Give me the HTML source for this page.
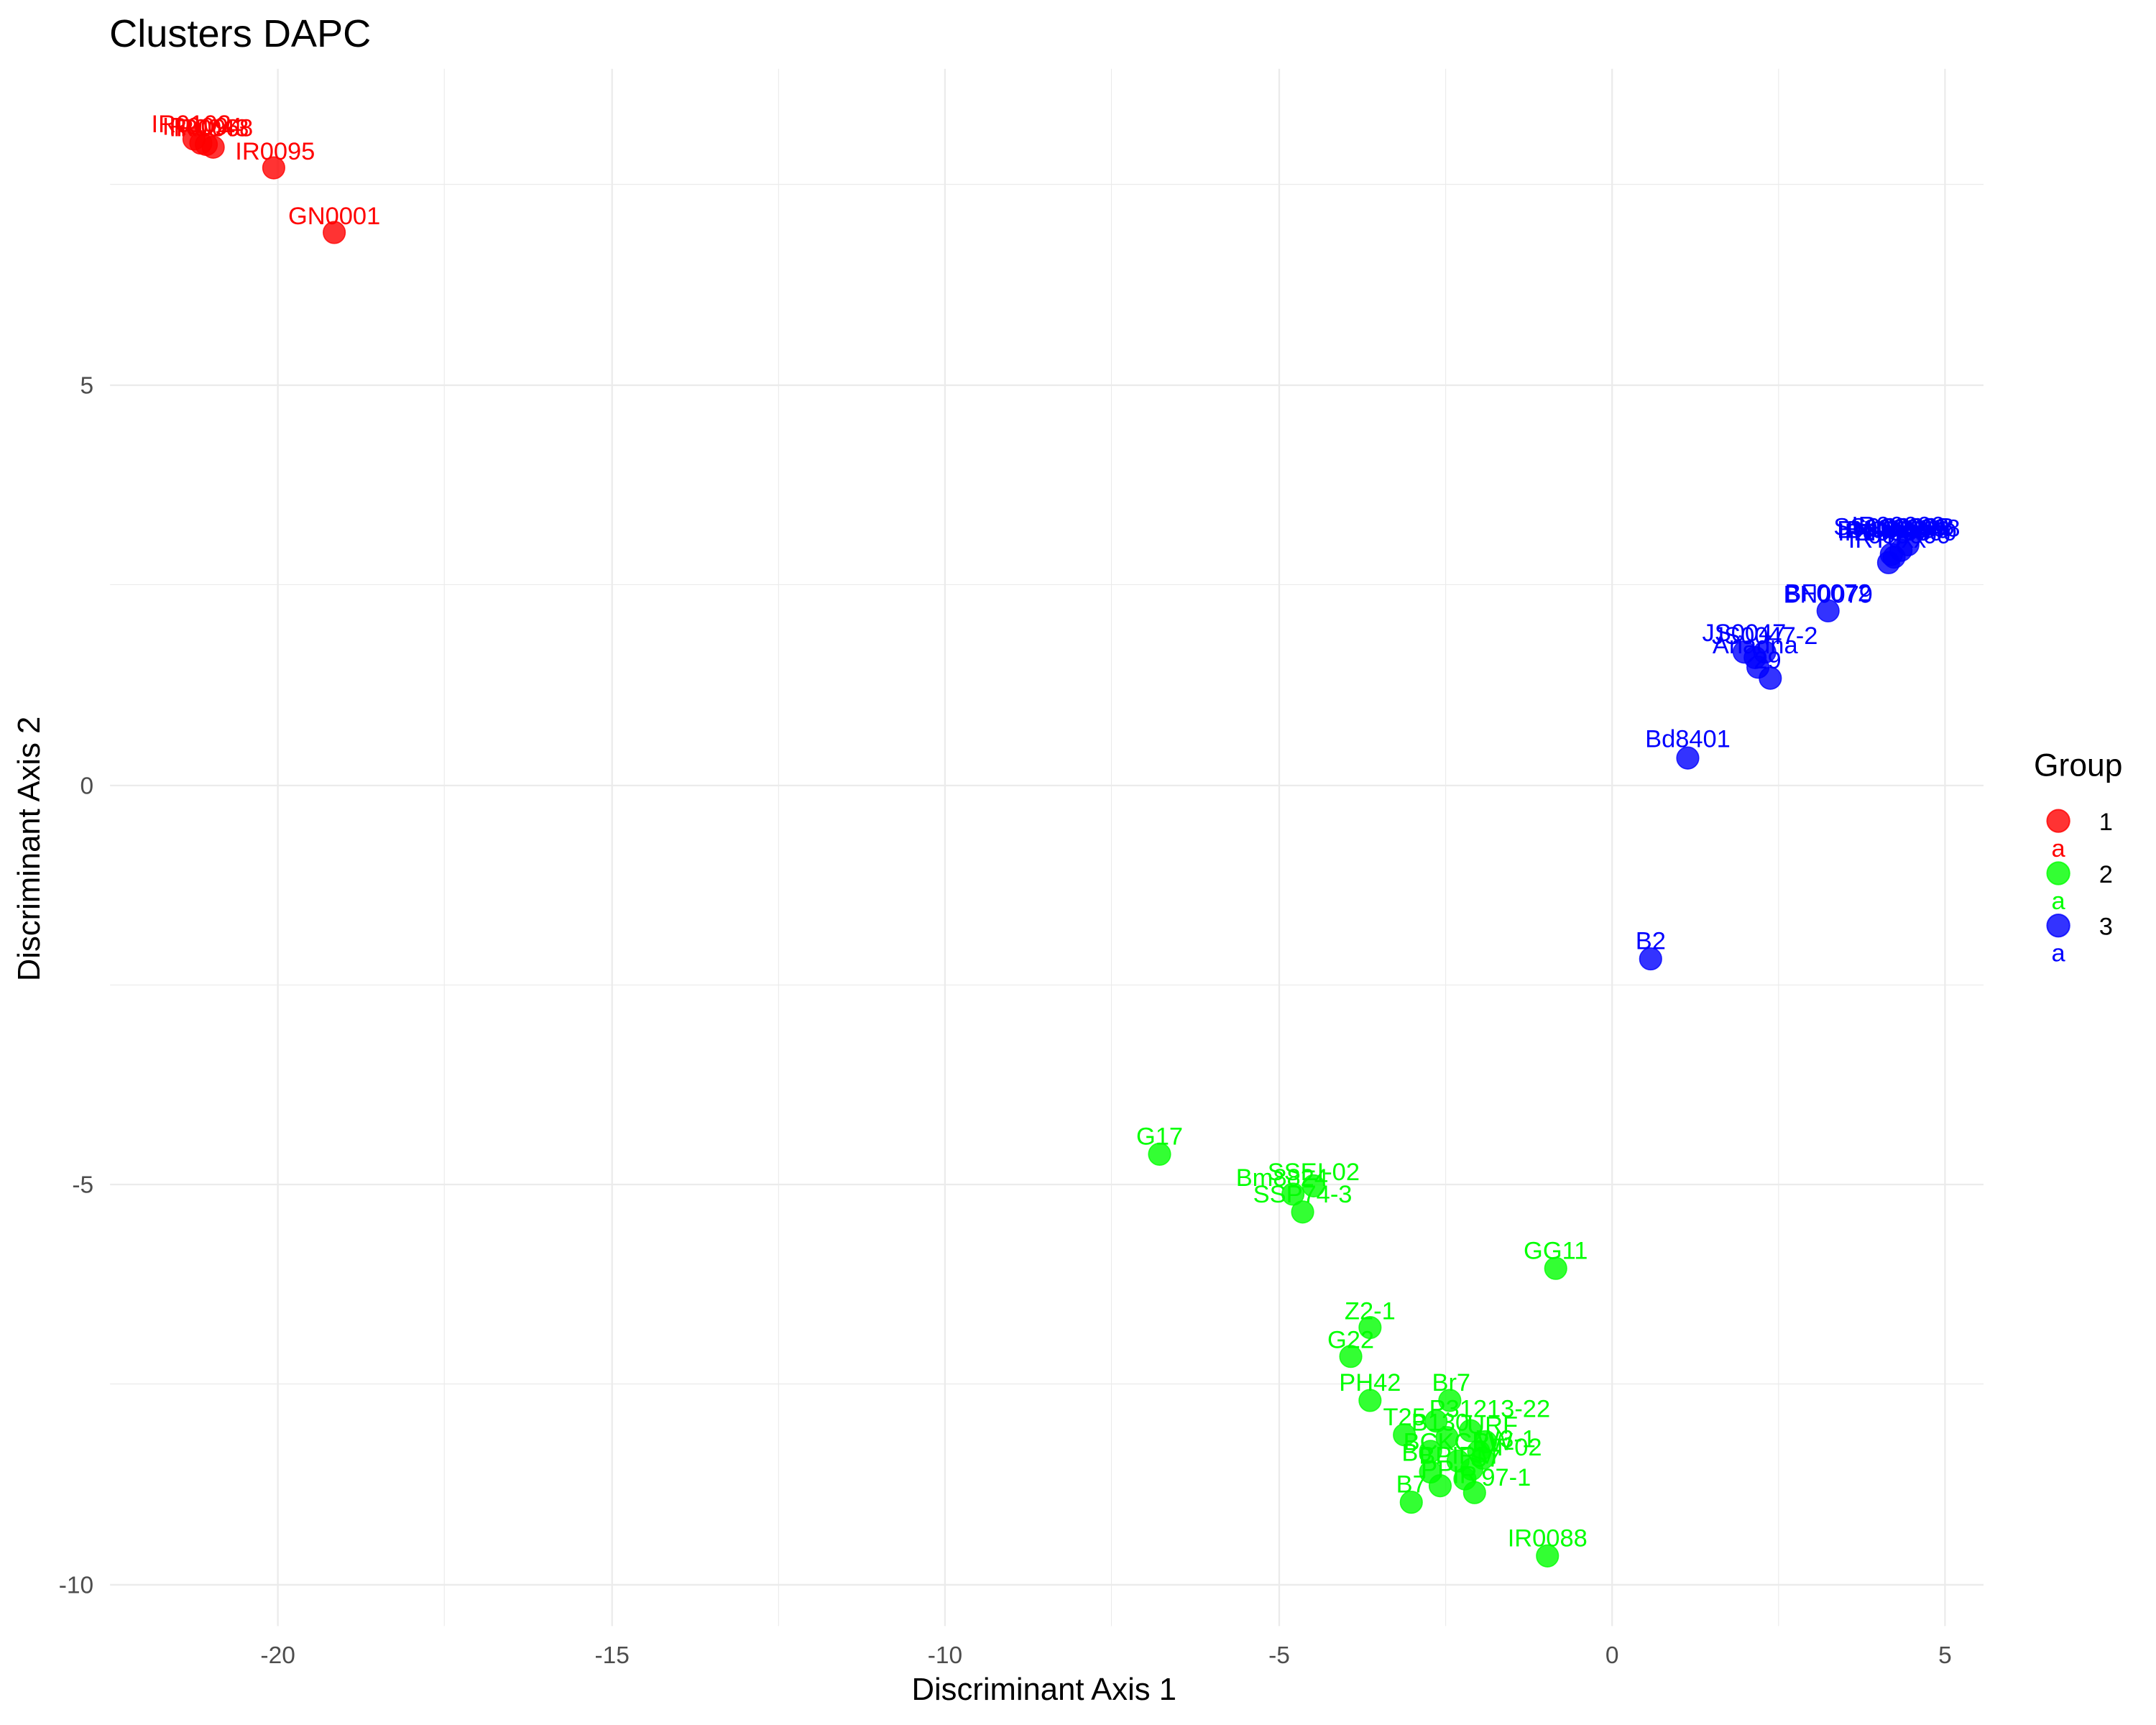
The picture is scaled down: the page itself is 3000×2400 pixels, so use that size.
<!DOCTYPE html>
<html><head><meta charset="utf-8"><style>html,body{margin:0;padding:0;background:#fff}svg{display:block}</style></head>
<body>
<svg width="3000" height="2400" viewBox="0 0 1567.4 1253.9" xmlns="http://www.w3.org/2000/svg" font-family="Liberation Sans, sans-serif">
<rect width="1567.4" height="1253.9" fill="#fff"/>
<g stroke="#ebebeb" stroke-width="0.6">
<line x1="323" y1="50" x2="323" y2="1182"/><line x1="566" y1="50" x2="566" y2="1182"/><line x1="808" y1="50" x2="808" y2="1182"/><line x1="1051" y1="50" x2="1051" y2="1182"/><line x1="1293" y1="50" x2="1293" y2="1182"/>
<line x1="80" y1="134" x2="1442" y2="134"/><line x1="80" y1="425" x2="1442" y2="425"/><line x1="80" y1="716" x2="1442" y2="716"/><line x1="80" y1="1006" x2="1442" y2="1006"/>
</g>
<g stroke="#ebebeb" stroke-width="1.2">
<line x1="202" y1="50" x2="202" y2="1182"/><line x1="445" y1="50" x2="445" y2="1182"/><line x1="687" y1="50" x2="687" y2="1182"/><line x1="930" y1="50" x2="930" y2="1182"/><line x1="1172" y1="50" x2="1172" y2="1182"/><line x1="1414" y1="50" x2="1414" y2="1182"/>
<line x1="80" y1="280" x2="1442" y2="280"/><line x1="80" y1="571" x2="1442" y2="571"/><line x1="80" y1="861" x2="1442" y2="861"/><line x1="80" y1="1152" x2="1442" y2="1152"/>
</g>
<g fill="#4d4d4d" font-size="17.5" text-anchor="middle">
<text x="202" y="1209">-20</text><text x="445" y="1209">-15</text><text x="687" y="1209">-10</text><text x="930" y="1209">-5</text><text x="1172" y="1209">0</text><text x="1414" y="1209">5</text>
</g>
<g fill="#4d4d4d" font-size="17.5" text-anchor="end">
<text x="68" y="286">5</text><text x="68" y="577">0</text><text x="68" y="867">-5</text><text x="68" y="1158">-10</text>
</g>
<text x="79.5" y="34" font-size="28.3">Clusters DAPC</text>
<text x="759" y="1235.6" font-size="22.8" text-anchor="middle">Discriminant Axis 1</text>
<text transform="translate(28.7,617) rotate(-90)" font-size="22.8" text-anchor="middle">Discriminant Axis 2</text>

<g fill="#ff0000" fill-opacity="0.8" stroke="#ff0000" stroke-opacity="0.8" stroke-width="0.8">
<circle cx="141" cy="101" r="8"/><circle cx="146" cy="104" r="8"/><circle cx="150" cy="105" r="8"/><circle cx="155" cy="107" r="8"/><circle cx="199" cy="122" r="8"/><circle cx="243" cy="169" r="8"/>
</g>
<g fill="#ff0000" font-size="18" text-anchor="middle">
<text x="139" y="96">IR0102</text><text x="147" y="98">IR0094</text><text x="152" y="99">IR0043</text><text x="155" y="99">IR0068</text><text x="200" y="116">IR0095</text><text x="243" y="163">GN0001</text>
</g>

<g fill="#0000ff" fill-opacity="0.8" stroke="#0000ff" stroke-opacity="0.8" stroke-width="0.8">
<circle cx="1373" cy="409" r="8"/><circle cx="1377" cy="405" r="8"/><circle cx="1382" cy="400" r="8"/><circle cx="1387" cy="396" r="8"/><circle cx="1375" cy="403" r="8"/>
<circle cx="1329" cy="444" r="8"/><circle cx="1268" cy="474" r="8"/><circle cx="1276" cy="478" r="8"/><circle cx="1283" cy="474" r="8"/><circle cx="1278" cy="485" r="8"/><circle cx="1287" cy="493" r="8"/>
<circle cx="1227" cy="551" r="8"/><circle cx="1200" cy="697" r="8"/>
</g>
<g fill="#0000ff" font-size="18" text-anchor="middle">
<text x="1370" y="393">IR00000</text><text x="1380" y="391">BN00000</text><text x="1375" y="389">SS000000</text><text x="1385" y="393">BH00000</text><text x="1372" y="398">IRT0xx</text><text x="1380" y="388">IR00000</text>
<text x="1390" y="390">0000008</text><text x="1368" y="391">BN0008</text><text x="1388" y="395">000000</text><text x="1395" y="389">0000B</text>
<text x="1329" y="437">BF0072</text><text x="1329" y="438">BN0079</text>
<text x="1268" y="466">JS0047</text><text x="1283" y="468">JS0047-2</text><text x="1276" y="475">Ariadna</text><text x="1285" y="486">29</text>
<text x="1227" y="543">Bd8401</text><text x="1200" y="690">B2</text>
</g>

<g fill="#00ff00" fill-opacity="0.8" stroke="#00ff00" stroke-opacity="0.8" stroke-width="0.8">
<circle cx="843" cy="839" r="8"/><circle cx="955" cy="862" r="8"/><circle cx="940" cy="868" r="8"/><circle cx="947" cy="881" r="8"/><circle cx="1131" cy="922" r="8"/>
<circle cx="996" cy="965" r="8"/><circle cx="982" cy="986" r="8"/><circle cx="996" cy="1018" r="8"/><circle cx="1054" cy="1018" r="8"/>
<circle cx="1021" cy="1043" r="8"/><circle cx="1044" cy="1033" r="8"/><circle cx="1052" cy="1045" r="8"/><circle cx="1069" cy="1040" r="8"/><circle cx="1075" cy="1055" r="8"/><circle cx="1080" cy="1048" r="8"/>
<circle cx="1040" cy="1055" r="8"/><circle cx="1060" cy="1062" r="8"/><circle cx="1070" cy="1068" r="8"/><circle cx="1078" cy="1060" r="8"/><circle cx="1040" cy="1070" r="8"/><circle cx="1047" cy="1080" r="8"/>
<circle cx="1065" cy="1075" r="8"/><circle cx="1072" cy="1085" r="8"/><circle cx="1026" cy="1092" r="8"/><circle cx="1125" cy="1131" r="8"/>
</g>
<g fill="#00ff00" font-size="18" text-anchor="middle">
<text x="843" y="832">G17</text><text x="955" y="858">SSEI-02</text><text x="932" y="862">Bm8824</text><text x="947" y="874">SSP74-3</text><text x="1131" y="915">GG11</text>
<text x="996" y="959">Z2-1</text><text x="982" y="980">G22</text><text x="996" y="1011">PH42</text><text x="1055" y="1011">Br7</text>
<text x="1083" y="1030">P31213-22</text><text x="1021" y="1036">T25</text><text x="1047" y="1040">B130</text><text x="1085" y="1042">URF</text>
<text x="1095" y="1052">W3-1</text><text x="1060" y="1054">BCKCRW</text><text x="1103" y="1058">T-02</text><text x="1030" y="1062">Bo</text><text x="1060" y="1064">BPIRM</text>
<text x="1080" y="1066">S7</text><text x="1045" y="1074">PP</text><text x="1065" y="1078">IR</text><text x="1095" y="1080">97-1</text><text x="1026" y="1085">B7</text><text x="1125" y="1124">IR0088</text>
</g>

<text x="1478.6" y="564" font-size="23.2">Group</text>
<circle cx="1496.4" cy="596.7" r="8.2" fill="#ff0000" fill-opacity="0.8" stroke="#ff0000" stroke-opacity="0.8"/>
<text x="1496.4" y="622.8" font-size="18" fill="#ff0000" text-anchor="middle">a</text>
<circle cx="1496.4" cy="634.8" r="8.2" fill="#00ff00" fill-opacity="0.8" stroke="#00ff00" stroke-opacity="0.8"/>
<text x="1496.4" y="660.8" font-size="18" fill="#00ff00" text-anchor="middle">a</text>
<circle cx="1496.4" cy="672.8" r="8.2" fill="#0000ff" fill-opacity="0.8" stroke="#0000ff" stroke-opacity="0.8"/>
<text x="1496.4" y="698.8" font-size="18" fill="#0000ff" text-anchor="middle">a</text>
<g font-size="18" fill="#000"><text x="1526" y="603.5">1</text><text x="1526" y="641.5">2</text><text x="1526" y="679.5">3</text></g>
</svg>
</body></html>
